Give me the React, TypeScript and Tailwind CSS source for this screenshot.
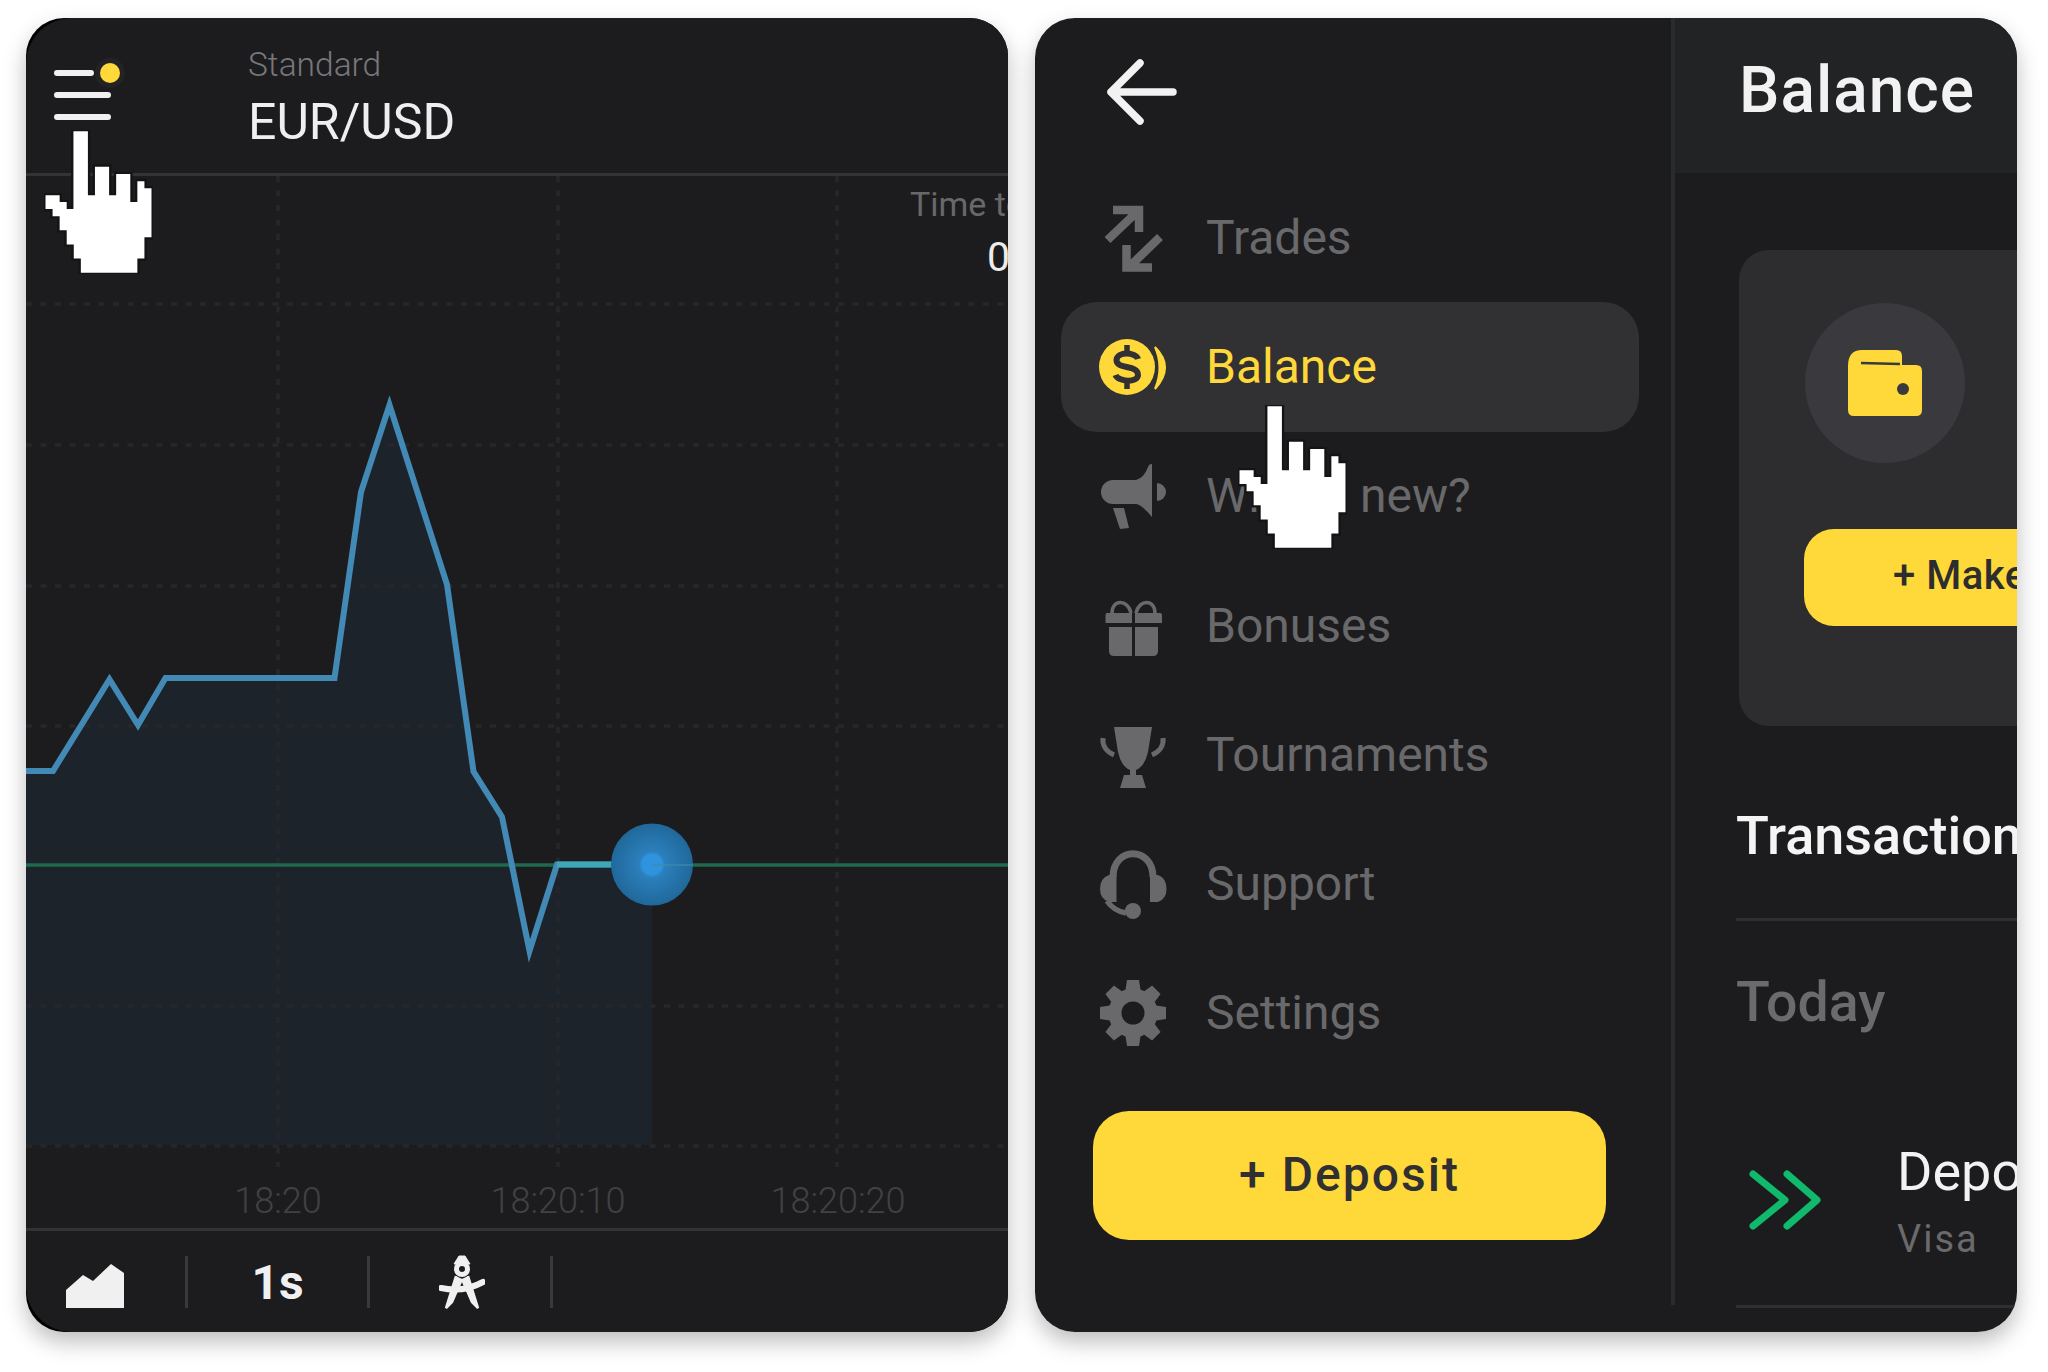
const GREY = '#69696b'

const points = '25,772 53,772 109.5,680.5 138,726 165.5,679 334.5,679 361,493 389.5,406 447,585.5 473.5,772.5 502,818 529.5,952 557,865.5 652,865.5'
const gridRows = [305, 446, 587, 727, 1007, 1147]
const gridCols = [278, 558, 837]

function Hand({ className }: { className: string }) {
  return (
    <svg className={className} width="109" height="144" viewBox="135 391 323 428" fill="#fff" aria-hidden="true">
      <path
        stroke="#141416"
        strokeWidth="14"
        paintOrder="stroke"
        d="M222 395H265V585H286V500H328V585H349V522H391V605H412V543H433V564H454V710H433V773H412V815H244V773H223V731H202V689H181V647H160V626H139V585H181V605H202V626H222Z"
      />
    </svg>
  )
}

function IconTrades() {
  return (
    <svg width="70" height="70" viewBox="0 0 70 70" fill="none" stroke={GREY} strokeWidth="8.500">
      <path d="M9.500 37 40 8M15 7H41V29" />
      <path d="M62 34 31 64M54 64.500H28.500V42" />
    </svg>
  )
}

function IconCoin() {
  return (
    <svg width="70" height="70" viewBox="0 0 70 70" fill="none">
      <circle cx="29" cy="35" r="28" fill="#ffd83a" />
      <path d="M57 15Q77 35 57 57Q66 35 57 15Z" fill="#ffd83a" stroke="#ffd83a" strokeWidth="2" />
      <path d="M40 27C38 20 19 19 18.500 28C18 38 40 32 40 43C40 51 20 50 17.500 43" stroke="#313133" strokeWidth="6" />
      <path d="M29 13V21M29 49V57" stroke="#313133" strokeWidth="5.500" />
    </svg>
  )
}

function IconMegaphone() {
  return (
    <svg width="70" height="70" viewBox="0 0 70 70" fill={GREY}>
      <path d="M15 19H38Q46 17 50 6Q51 3 54 3V56Q44 44 38 43H15A12 12 0 0 1 15 19Z" />
      <path d="M15 47H26L31 67L22 68Z" />
      <path d="M59 22A9 9 0 0 1 59 40Z" />
    </svg>
  )
}

function IconGift() {
  return (
    <svg width="70" height="70" viewBox="0 0 70 70" fill={GREY}>
      <path d="M9 22H34V32H7.500V24Q7.500 22 9 22ZM37 22H62Q64 22 64 24V32H37ZM11 36H34V65H16Q11 65 11 60ZM37 36H60V60Q60 65 55 65H37Z" />
      <path d="M14 22C14 8 30 8 33 22M38 22C41 8 57 8 57 22" fill="none" stroke={GREY} strokeWidth="3.500" />
    </svg>
  )
}

function IconTrophy() {
  return (
    <svg width="70" height="70" viewBox="0 0 70 70" fill={GREY}>
      <path d="M16 7H54L50 32Q47 46 38 50V55H44L48 68H22L26 55H32V50Q23 46 20 32Z" />
      <path d="M5 18C4 26 9 32 16 35M65 18C66 26 61 32 54 35" fill="none" stroke={GREY} strokeWidth="5" />
    </svg>
  )
}

function IconHeadset() {
  return (
    <svg width="70" height="70" viewBox="0 0 70 70" fill={GREY}>
      <path d="M15 28C15 -3 55 -3 55 28" fill="none" stroke={GREY} strokeWidth="7" />
      <path d="M18.500 26V53H11Q2 50 2 40Q2 29 11 26ZM52 26H60Q68.500 29 68.500 40Q68.500 50 60 53H52Z" />
      <path d="M9 52Q16 62 28 64" fill="none" stroke={GREY} strokeWidth="5.500" />
      <circle cx="35" cy="62" r="8" />
    </svg>
  )
}

function IconGear() {
  const teeth = [0, 45, 90, 135, 180, 225, 270, 315]
  return (
    <svg width="70" height="70" viewBox="0 0 70 70" fill={GREY}>
      {teeth.map((deg) => (
        <path key={deg} d="M29 2H41L43 15H27Z" transform={`rotate(${deg} 35 35)`} />
      ))}
      <circle cx="35" cy="35" r="24.500" />
      <circle cx="35" cy="35" r="11.500" fill="#1c1c1e" />
    </svg>
  )
}

const menu = [
  { label: 'Trades', icon: <IconTrades /> },
  { label: 'Balance', icon: <IconCoin />, active: true },
  { label: "What's new?", icon: <IconMegaphone /> },
  { label: 'Bonuses', icon: <IconGift /> },
  { label: 'Tournaments', icon: <IconTrophy /> },
  { label: 'Support', icon: <IconHeadset /> },
  { label: 'Settings', icon: <IconGear /> },
]

function TradePanel() {
  return (
    <div className="h-[1314px] w-[982px] shrink-0 rounded-[38px] bg-black shadow-[0_10px_22px_rgba(0,0,0,0.26)]">
      <div className="relative h-full overflow-hidden rounded-l-[46px] rounded-r-[38px] bg-[#1c1c1e]">
        <header className="flex h-[158px] border-b-[3px] border-[#323335] pl-[28px] pt-[48px]">
          <div className="relative w-[60px]">
            <div className="mt-[4px] h-[6px] w-[40px] rounded-full bg-[#f0f0f0]" />
            <div className="mt-[16px] h-[6px] w-[57px] rounded-full bg-[#f0f0f0]" />
            <div className="mt-[16px] h-[6px] w-[57px] rounded-full bg-[#f0f0f0]" />
            <span className="absolute left-[46px] top-[-3px] size-[20px] rounded-full bg-[#ffd83a] ring-[5px] ring-[#232325]" />
          </div>
          <div className="ml-[134px] mt-[-23px]">
            <div className="text-[33.500px] font-light leading-[44px] text-[#77777a]">Standard</div>
            <div className="mt-[7px] text-[50px] leading-[56px] text-[#efefef]">EUR/USD</div>
          </div>
        </header>

        <div className="relative h-[1052px]">
          <svg className="absolute inset-0" width="982" height="1052" viewBox="26 177 982 1052" fill="none">
            <defs>
              <radialGradient id="pulse">
                <stop offset="0" stopColor="#2f93dd" />
                <stop offset="0.24" stopColor="#2f93dd" />
                <stop offset="0.32" stopColor="#2b7fbc" />
                <stop offset="1" stopColor="#20689a" />
              </radialGradient>
            </defs>
            <path d="M25 1146V772L53 772 109.5 680.5 138 726 165.5 679 334.5 679 361 493 389.5 406 447 585.5 473.5 772.5 502 818 529.5 952 557 865.5 652 865.5V1146Z" fill="#1d232a" />
            {gridRows.map((y) => (
              <path key={y} d={`M26 ${y}H1008`} stroke="#26272a" strokeWidth="3.500" strokeDasharray="6 8.500" />
            ))}
            {gridCols.map((x) => (
              <path key={x} d={`M${x} 177V1168`} stroke="#26272a" strokeWidth="3.500" strokeDasharray="6 8.500" />
            ))}
            <path d="M26 866H1008" stroke="#1e6a4d" strokeWidth="3.500" />
            <polyline points={points} stroke="#4289b5" strokeWidth="6" />
            <path d="M557 865.500H652" stroke="#3fa6b8" strokeWidth="6" />
            <circle cx="652" cy="865.500" r="41" fill="url(#pulse)" />
            <path d="M652 866H693" stroke="#3a8fa5" strokeWidth="2" opacity="0.6" />
          </svg>

          <div className="absolute left-[884px] top-[6px] whitespace-nowrap text-[34px] leading-[44px] text-[#68686a]">Time to purchase</div>
          <div className="absolute left-[961px] top-[57px] whitespace-nowrap text-[41px] leading-[48px] text-[#ececec]">00:10</div>

          <div className="absolute left-[112px] top-[1002px] flex text-[36px] font-light leading-[46px] text-[#414143]">
            <span className="w-[280px] text-center">18:20</span>
            <span className="w-[280px] text-center">18:20:10</span>
            <span className="w-[280px] text-center">18:20:20</span>
          </div>
        </div>

        <footer className="flex h-[104px] items-start border-t-[3px] border-[#323335] pt-[25px] text-[#f0f0f0]">
          <div className="flex h-[52px] w-[162px] items-end border-r-[3px] border-[#39393b] pl-[40px]">
            <svg width="58" height="44" viewBox="0 0 58 44" fill="#f0f0f0">
              <path d="M0 44V26L17 11 27 17 45 0 58 9V44Z" />
            </svg>
          </div>
          <div className="flex h-[52px] w-[182px] items-center justify-center border-r-[3px] border-[#39393b] pt-[2px] text-[48px] font-bold">1s</div>
          <div className="flex h-[52px] w-[183px] items-center justify-center border-r-[3px] border-[#39393b]">
            <svg className="ml-[4px]" width="46" height="54" viewBox="0 0 46 54" fill="none" stroke="#f0f0f0">
              <path d="M20 1H26L31 9H15Z" fill="#f0f0f0" strokeWidth="1" />
              <circle cx="23" cy="14" r="5.500" strokeWidth="5" />
              <path d="M17 21 7 53 13 47 23 24M29 21 39 53 33 47 23 24" fill="#f0f0f0" strokeWidth="2.500" />
              <path d="M2 33Q24 38 44 27" strokeWidth="6" strokeLinecap="round" />
            </svg>
          </div>
        </footer>
      </div>
    </div>
  )
}

function BalancePanel() {
  return (
    <div className="flex h-[1314px] w-[982px] shrink-0 items-start overflow-hidden rounded-[40px] bg-[#1c1c1e] shadow-[0_10px_22px_rgba(0,0,0,0.26)]">
      <aside className="h-[1287px] w-[640px] shrink-0 border-r-[4px] border-[#2a2b2d]">
        <div className="flex h-[155px] items-start pl-[72px] pt-[41px]">
          <svg width="70" height="66" viewBox="0 0 70 66" fill="none" stroke="#f2f2f2" strokeWidth="7.500" strokeLinecap="round" strokeLinejoin="round">
            <path d="M33 4 4 33 33 62M4 33H66" />
          </svg>
        </div>

        <nav className="ml-[26px] w-[578px]">
          {menu.map((item) => (
            <div
              key={item.label}
              className={`flex h-[129.3px] items-center gap-[38px] rounded-[36px] pl-[37px] text-[48px] ${item.active ? 'bg-[#313133] text-[#ffd83a]' : 'text-[#69696b]'}`}
            >
              {item.icon}
              <span>{item.label}</span>
            </div>
          ))}
        </nav>

        <button className="ml-[58px] mt-[33px] h-[129px] w-[513px] rounded-[36px] bg-[#ffd83a] pb-[2px] text-[48px] font-medium tracking-[2px] text-[#303033]">
          + Deposit
        </button>
      </aside>

      <main className="h-full min-w-0 flex-1 overflow-hidden whitespace-nowrap">
        <div className="flex h-[155px] items-center bg-[#222325] pb-[10px] pl-[64px] text-[64px] font-medium tracking-[1px] text-[#f2f2f2]">Balance</div>

        <section className="ml-[64px] mt-[77px] h-[476px] w-[500px] rounded-[30px] bg-[#2d2d2f] pl-[65px] pt-[53px]">
          <div className="ml-px flex size-[160px] items-center justify-center rounded-full bg-[#3a3a3e]">
            <svg width="74" height="66" viewBox="0 0 74 66" fill="#ffd83a">
              <path d="M0 16Q0 0 14 0H48Q54 0 54 6V15H68Q74 15 74 21V60Q74 66 68 66H6Q0 66 0 60Z" />
              <path d="M13 13 52 14" stroke="#3a3a3e" strokeWidth="2.500" />
              <circle cx="55" cy="39" r="6" fill="#3a3a3e" />
            </svg>
          </div>
          <button className="mt-[66px] h-[97px] w-[500px] rounded-[30px] bg-[#ffd83a] pb-[3px] pl-[89px] text-left text-[40px] font-medium tracking-[0.5px] text-[#2d2d2f]">
            + Make a deposit
          </button>
        </section>

        <div className="ml-[61px] mt-[72px] border-b-[3px] border-[#2e2f31] pb-[44px] text-[54px] font-medium leading-[76px] text-[#f4f4f4]">Transactions</div>
        <div className="ml-[61px] mt-[50px] text-[55.500px] font-medium leading-[64px] text-[#6b6b6d]">Today</div>

        <div className="ml-[61px] mt-[82px] flex h-[191px] items-start border-b-[3px] border-[#2e2f31]">
          <svg className="ml-[13px] mt-[53px] shrink-0" width="72" height="60" viewBox="0 0 72 60" fill="none" stroke="#10b96b" strokeWidth="7" strokeLinecap="round" strokeLinejoin="round">
            <path d="M4 4 36 30 4 56M38 4 68 30 38 56" />
          </svg>
          <div className="ml-[76px] mt-[24px] shrink-0">
            <div className="text-[54px] leading-[62px] text-[#f2f2f2]">Deposit</div>
            <div className="mt-[13px] text-[38px] leading-[46px] tracking-[2px] text-[#6a6a6c]">Visa</div>
          </div>
        </div>
      </main>
    </div>
  )
}

export default function App() {
  return (
    <div className="relative flex h-[1372px] w-[2048px] gap-[27px] overflow-hidden bg-white pl-[26px] pt-[18px] [font-family:Roboto,sans-serif]">
      <TradePanel />
      <BalancePanel />
      <Hand className="absolute left-[44px] top-[130px]" />
      <Hand className="absolute left-[1238px] top-[405px]" />
    </div>
  )
}
